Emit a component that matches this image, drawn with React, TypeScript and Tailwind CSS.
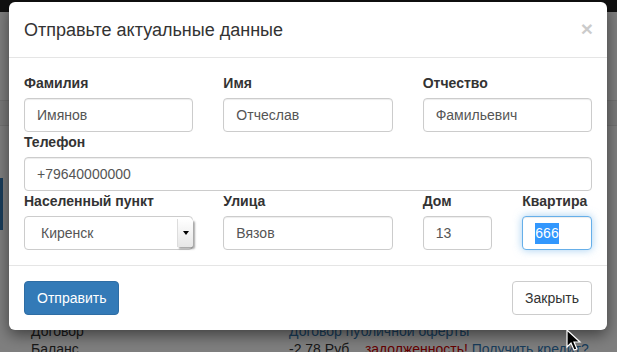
const FONT = { fontFamily: '"Liberation Sans", Arial, sans-serif' }

const inputCls =
  'w-full h-[34px] border border-[#ccc] rounded-[4px] px-3 text-[14px] text-[#555] flex items-center bg-white shadow-[inset_0_1px_1px_rgba(0,0,0,0.075)]'

function Field({ label, value }: { label: string; value: string }) {
  return (
    <div className="flex flex-col">
      <label className="text-[14px] leading-5 font-bold text-[#333] mb-[5px]">{label}</label>
      <div className={inputCls}>{value}</div>
    </div>
  )
}

export default function App() {
  return (
    <div className="relative w-[617px] h-[352px] overflow-hidden bg-white" style={FONT}>
      {/* page behind the dialog */}
      <div className="flex flex-col">
        <div className="h-[12px] shrink-0 bg-[#222]" />
        <div className="h-[88px] shrink-0" />
        <div className="h-[26px] shrink-0 bg-[#f5f5f5] border-y border-[#e5e5e5]" />
        <div className="h-[52px] shrink-0" />
        <div className="h-[52px] shrink-0 w-[3px] bg-[#337ab7]" />
        <div className="h-[92px] shrink-0" />
        <div className="grid grid-cols-[258px_1fr] pl-[31px] text-[14px] leading-[18px] text-[#333] whitespace-nowrap">
          <span>Договор</span>
          <span className="text-[#337ab7]">Договор публичной оферты</span>
          <span>Баланс</span>
          <span>
            -2.78 Руб. , <span className="text-[#c00]">задолженность!</span>{' '}
            <span className="text-[#337ab7]">Получить кредит?</span>
          </span>
        </div>
      </div>

      {/* backdrop */}
      <div className="absolute inset-0 bg-black/50" />

      {/* modal */}
      <div className="absolute left-[9px] top-[2px] w-[598px] bg-white rounded-[6px] shadow-[0_5px_15px_rgba(0,0,0,0.5)]">
        <div className="flex items-center justify-between px-[15px] h-[56px] border-b border-[#e5e5e5]">
          <h4 className="text-[18px] leading-[26px] text-[#333]">Отправьте актуальные данные</h4>
          <span className="text-[21px] font-bold text-black opacity-20 leading-none mr-[-1px] mb-[3px]">×</span>
        </div>

        <div className="p-[15px]">
          <div className="grid grid-cols-3 gap-x-[30px]">
            <Field label="Фамилия" value="Имянов" />
            <Field label="Имя" value="Отчеслав" />
            <Field label="Отчество" value="Фамильевич" />
          </div>
          <Field label="Телефон" value="+79640000000" />
          <div className="grid grid-cols-3 gap-x-[30px]">
            <div className="flex flex-col">
              <label className="text-[14px] leading-5 font-bold text-[#333] mb-[5px]">Населенный пункт</label>
              <div className="h-[34px] border border-[#ccc] rounded-[4px] flex items-stretch bg-white text-[14px] text-[#555]">
                <span className="flex-1 flex items-center pl-4">Киренск</span>
                <span className="w-[16px] my-[2px] mr-[-1px] flex items-center justify-center bg-gradient-to-b from-white to-[#e6e6e6] border-l border-[#ddd] shadow-[2px_2px_2px_rgba(0,0,0,0.35)] rounded-r-[2px]">
                  <span className="w-0 h-0 border-x-[3px] border-x-transparent border-t-[4px] border-t-black" />
                </span>
              </div>
            </div>
            <Field label="Улица" value="Вязов" />
            <div className="grid grid-cols-2 gap-x-[30px]">
              <Field label="Дом" value="13" />
              <div className="flex flex-col">
                <label className="text-[14px] leading-5 font-bold text-[#333] mb-[5px]">Квартира</label>
                <div className="w-full h-[34px] border border-[#66afe9] rounded-[4px] px-3 text-[14px] flex items-center bg-white shadow-[inset_0_1px_1px_rgba(0,0,0,0.075),0_0_8px_rgba(102,175,233,0.6)]">
                  <span className="bg-[#3297fd] text-white">666</span>
                </div>
              </div>
            </div>
          </div>
        </div>

        <div className="flex justify-between items-center p-[15px] border-t border-[#e5e5e5]">
          <button className="h-[34px] px-3 rounded-[4px] bg-[#337ab7] border border-[#2e6da4] text-white text-[14px]">
            Отправить
          </button>
          <button className="h-[34px] px-3 rounded-[4px] bg-white border border-[#ccc] text-[#333] text-[14px]">
            Закрыть
          </button>
        </div>
      </div>

      {/* mouse pointer */}
      <svg className="absolute left-[566px] top-[329px]" width="16" height="24" viewBox="0 0 16 24">
        <path d="M1 1 L1 18 L5 14 L8 21 L11 20 L8 13 L14 13 Z" fill="#000" stroke="#fff" strokeWidth="1.2" />
      </svg>
    </div>
  )
}
